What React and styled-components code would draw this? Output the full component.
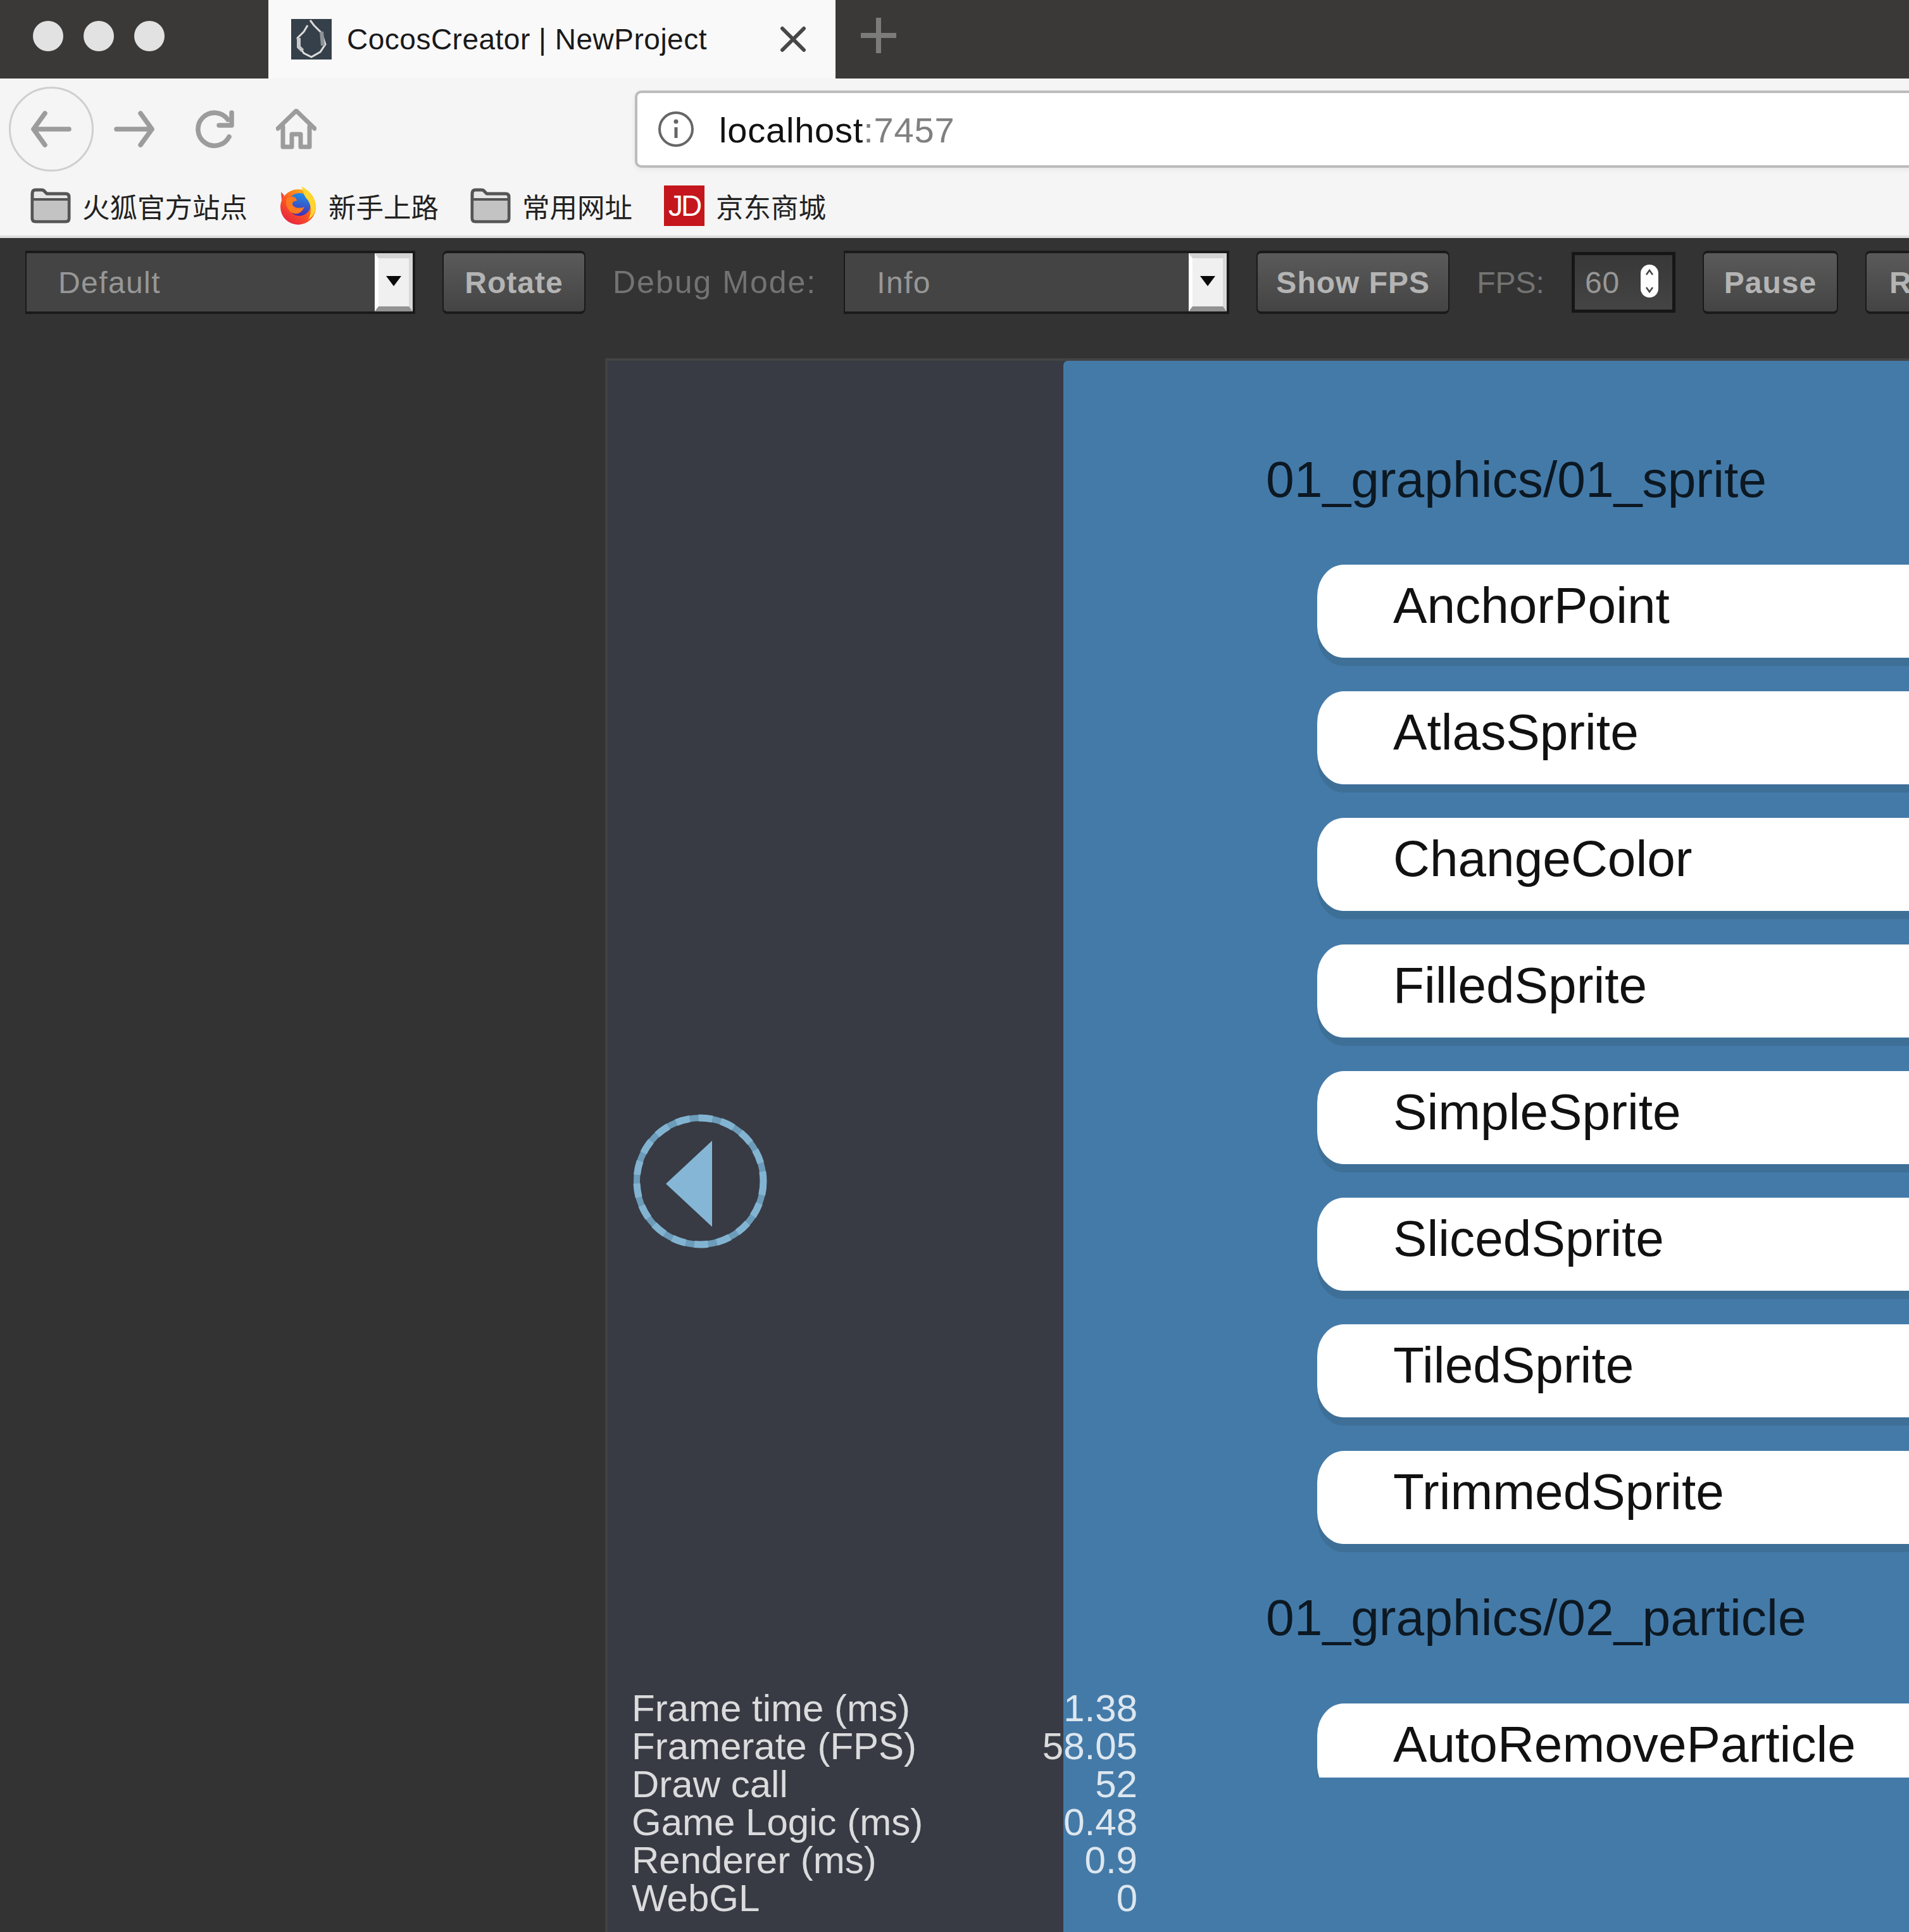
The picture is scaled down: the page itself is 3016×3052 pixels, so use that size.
import React from 'react';
import styled, { createGlobalStyle } from 'styled-components';

const Global = createGlobalStyle`
  html, body { margin: 0; padding: 0; background: #333333; }
  * { box-sizing: border-box; }
`;

const SANS = '"Liberation Sans", Arial, sans-serif';
const CJK = '"Liberation Sans", "Noto Sans CJK SC", sans-serif';

const Page = styled.div`
  width: 3016px; height: 3052px; overflow: hidden; display: flex; flex-direction: column;
  background: #333333; font-family: ${SANS};
`;

/* ---------- browser chrome ---------- */
const TabStrip = styled.div`
  height: 124px; flex: none; display: flex; align-items: stretch; background: #3a3937;
`;
const Lights = styled.div`
  width: 424px; flex: none; display: flex; align-items: center; gap: 32px; padding: 0 0 10px 52px;
`;
const Light = styled.span`
  width: 48px; height: 48px; border-radius: 50%; background: #e2e2e2; flex: none;
`;
const Tab = styled.div`
  width: 896px; flex: none; display: flex; align-items: center; background: #f9f9fa; padding-left: 36px;
`;
const TabTitle = styled.span`
  font-size: 46px; letter-spacing: .5px; color: #1a1a1a; margin-left: 24px; white-space: nowrap;
`;
const TabClose = styled.svg`
  width: 42px; height: 42px; margin-left: auto; margin-right: 46px; flex: none;
`;
const NewTab = styled.svg`
  width: 56px; height: 56px; margin: 28px 0 0 40px; flex: none;
`;
const NavBar = styled.div`
  height: 160px; flex: none; display: flex; align-items: center; background: #f5f5f5;
  padding-left: 14px; overflow: hidden;
`;
const BackCircle = styled.div`
  width: 134px; height: 134px; flex: none; border-radius: 50%; border: 3px solid #cfcfcf;
  display: flex; align-items: center; justify-content: center; margin-right: 32px;
`;
const NavIcon = styled.svg`
  width: 64px; height: 64px; flex: none; margin-right: ${p => p.$gap || 64}px;
`;
const UrlBar = styled.div`
  height: 122px; flex: 1; margin: 0 -20px 0 502px; background: #fff; border: 4px solid #bcbcbc;
  border-radius: 10px; display: flex; align-items: center; padding-left: 32px;
  box-shadow: 0 3px 8px rgba(0,0,0,.06);
`;
const UrlText = styled.span`
  font-size: 56px; letter-spacing: .8px; color: #111; margin-left: 39px; white-space: nowrap; padding-top: 3px;
`;
const UrlPort = styled.span` color: #808080; `;
const BookmarkBar = styled.div`
  height: 88px; flex: none; display: flex; align-items: center; gap: 50px; background: #f5f5f5;
  padding: 0 0 6px 48px;
`;
const Bookmark = styled.div`
  display: flex; align-items: center; gap: 18px; font-family: ${CJK}; font-size: 43.5px; color: #222;
  white-space: nowrap;
`;
const JdLogo = styled.span`
  width: 64px; height: 64px; flex: none; background: #c4161c; color: #fff; display: flex; align-items: center;
  justify-content: center; font-family: ${SANS}; font-size: 46px; letter-spacing: -3px; overflow: hidden;
`;
const Divider = styled.div`
  height: 4px; flex: none; background: #dedede;
`;

/* ---------- preview toolbar ---------- */
const Toolbar = styled.div`
  height: 190px; flex: none; display: flex; align-items: flex-start; gap: 43px; padding: 20px 0 0 40px;
  overflow: hidden; background: #333333;
`;
const Select = styled.div`
  width: ${p => p.$w}px; height: 100px; flex: none; display: flex; align-items: center; background: #444444;
  border-style: solid; border-color: #1a1a1a; border-width: 4px 4px 4px 2px; font-size: 48px; letter-spacing: 1.4px;
  color: #979797; padding-left: ${p => p.$pad}px; position: relative;
`;
const SelectArrow = styled.span`
  position: absolute; right: 0; top: 0; bottom: 0; width: 60px; background: #f0f0f0;
  border-style: solid; border-width: 8px 6px 8px 6px; border-color: #d2d2d2 #d8d8d8 #929292 #ffffff;
  display: flex; align-items: center; justify-content: center;
  &::after {
    content: ""; width: 0; height: 0; margin-top: -4px;
    border-left: 12px solid transparent; border-right: 12px solid transparent; border-top: 16px solid #0a0a0a;
  }
`;
const ToolButton = styled.div`
  width: ${p => p.$w}px; height: 100px; flex: none; display: flex; align-items: center; justify-content: center;
  border-radius: 8px; border-style: solid; border-color: #1a1a1a; border-width: 4px 2px 4px 2px;
  background: linear-gradient(#5a5a5a, #444444); font-size: 48px; font-weight: 700; letter-spacing: 1px; color: #b4b4b4;
  white-space: nowrap;
`;
const ClippedButton = styled(ToolButton)`
  justify-content: flex-start; padding-left: 36px;
`;
const ToolLabel = styled.span`
  height: 100px; flex: none; display: flex; align-items: center; font-size: ${p => p.$size}px;
  letter-spacing: ${p => p.$spacing}px; color: #737373; white-space: nowrap;
`;
const NumberBox = styled.div`
  width: 164px; height: 96px; margin-top: 2px; flex: none; display: flex; align-items: center; position: relative;
  border: 5px solid #161616; background: linear-gradient(#383838, #444444); color: #979797; font-size: 48px;
  letter-spacing: 1px; padding-left: 16px;
`;
const Spinner = styled.svg`
  position: absolute; left: 104px; top: 15px; width: 28px; height: 52px;
`;

/* ---------- game canvas ---------- */
const GameArea = styled.div`
  flex: 1; display: flex; padding-left: 956px; min-height: 0;
`;
const Canvas = styled.div`
  flex: 1; display: flex; position: relative; border-left: 4px solid #414141; border-top: 4px solid #444444;
  min-width: 0; background: #383b44;
`;
const SideStrip = styled.div`
  width: 720px; flex: none; padding: 1190px 0 0 40px;
`;
const BackButton = styled.svg`
  width: 212px; height: 212px; display: block;
`;
const ListPanel = styled.div`
  flex: 1; background: #447aa8; overflow: hidden; min-width: 0; border-top-left-radius: 7px;
`;
const ListClip = styled.div`
  height: 2238px; overflow: hidden; padding: 137px 0 0 320px; display: flex; flex-direction: column;
`;
const GroupTitle = styled.div`
  height: 100px; flex: none; display: flex; align-items: center; font-size: 80.4px; color: #0c1822;
  white-space: nowrap; margin: ${p => (p.$first ? 0 : 66)}px 0 ${p => (p.$first ? 85 : 86)}px;
`;
const SceneRow = styled.div`
  width: 1400px; height: 147px; flex: none; margin: 0 0 ${p => (p.$last ? 0 : 53)}px 81px;
  display: flex; align-items: center; padding: 0 0 18px 120px; background: #fff; font-size: 80.2px; color: #111;
  border-radius: 42px 0 0 42px / 50px 0 0 50px; box-shadow: 0 13px 0 #3e6f97;
  white-space: nowrap;
`;
const Stats = styled.div`
  position: absolute; left: 38px; bottom: 23px; width: 799px; display: flex; justify-content: space-between;
  font-size: 60px; line-height: 60px; color: rgba(255,255,255,.82);
`;
const StatLabels = styled.div` display: flex; flex-direction: column; `;
const StatValues = styled.div` display: flex; flex-direction: column; align-items: flex-end; `;

const Folder = () => (
  <svg width="64" height="56" viewBox="0 0 64 56" style={{ flex: 'none' }}>
    <path d="M3 9 Q3 3 8 3 H18 Q21 3 23 6 L26 9 H56 Q61 9 61 14 V48 Q61 53 56 53 H8 Q3 53 3 48 Z" fill="#e6e6e6" stroke="#555" strokeWidth="5" strokeLinejoin="round" />
    <path d="M5.5 19 H58.5 V48 Q58.5 50.5 56 50.5 H8 Q5.5 50.5 5.5 48 Z" fill="#c3c3c3" />
    <path d="M4 18 H60" stroke="#555" strokeWidth="4" />
  </svg>
);

const Firefox = () => (
  <svg width="60" height="60" viewBox="0 0 60 60" style={{ flex: 'none' }}>
    <defs>
      <linearGradient id="fxBody" x1="0.8" y1="0.1" x2="0.2" y2="0.9">
        <stop offset="0" stopColor="#ffb21a" />
        <stop offset="0.5" stopColor="#ff5a20" />
        <stop offset="1" stopColor="#e8263f" />
      </linearGradient>
      <linearGradient id="fxGlobe" x1="0.6" y1="0" x2="0.4" y2="1">
        <stop offset="0" stopColor="#1f8ee8" />
        <stop offset="1" stopColor="#4a2bb0" />
      </linearGradient>
    </defs>
    <circle cx="30" cy="32" r="28" fill="url(#fxBody)" />
    <path d="M3 8 L8 14 L4 22 Z" fill="#f2402f" />
    <circle cx="32" cy="28" r="18" fill="url(#fxGlobe)" />
    <path d="M36 0 Q56 10 58 30 Q58 44 46 52 Q54 36 46 22 Q38 14 36 0 Z" fill="#ffd52e" />
    <path d="M12 18 Q26 12 28 22 Q18 24 22 30 Q28 36 40 32 Q32 48 18 40 Q8 30 12 18 Z" fill="#ff7a1f" />
  </svg>
);

const Favicon = () => (
  <svg width="64" height="64" viewBox="0 0 64 64" style={{ flex: 'none', display: 'block' }}>
    <rect width="64" height="64" fill="#36404a" />
    <path d="M30 2 L36 10 L48 22 L54 40 L46 52 L32 60 L20 54 L12 42 L10 30 L20 20 L26 10" fill="none" stroke="#dcdcdc" strokeWidth="3" />
    <path d="M12 30 L12 44 L18 50" fill="none" stroke="#c8c8c8" strokeWidth="6" />
    <path d="M48 20 L50 42" fill="none" stroke="#8d9297" strokeWidth="6" />
  </svg>
);

const scenes = ['AnchorPoint', 'AtlasSprite', 'ChangeColor', 'FilledSprite', 'SimpleSprite', 'SlicedSprite', 'TiledSprite', 'TrimmedSprite'];
const stats = [
  ['Frame time (ms)', '1.38'],
  ['Framerate (FPS)', '58.05'],
  ['Draw call', '52'],
  ['Game Logic (ms)', '0.48'],
  ['Renderer (ms)', '0.9'],
  ['WebGL', '0'],
];

export default function App() {
  return (
    <Page>
      <Global />
      <TabStrip>
        <Lights><Light /><Light /><Light /></Lights>
        <Tab>
          <Favicon />
          <TabTitle>CocosCreator | NewProject</TabTitle>
          <TabClose viewBox="0 0 42 42">
            <path d="M4 4 L38 38 M38 4 L4 38" stroke="#474747" strokeWidth="6" strokeLinecap="round" />
          </TabClose>
        </Tab>
        <NewTab viewBox="0 0 56 56">
          <path d="M28 1 V55 M1 28 H55" stroke="#7b7b7a" strokeWidth="8" strokeLinecap="round" />
        </NewTab>
      </TabStrip>
      <NavBar>
        <BackCircle>
          <svg width="64" height="58" viewBox="0 0 64 58">
            <path d="M4 29 H60 M4 29 L22 4 M4 29 L22 54" fill="none" stroke="#9c9c9c" strokeWidth="7.5" strokeLinecap="round" strokeLinejoin="round" />
          </svg>
        </BackCircle>
        <NavIcon viewBox="0 0 64 64">
          <path d="M4 32 H60 M60 32 L42 7 M60 32 L42 57" fill="none" stroke="#9c9c9c" strokeWidth="7.5" strokeLinecap="round" strokeLinejoin="round" />
        </NavIcon>
        <NavIcon viewBox="0 0 64 64">
          <path d="M54 44 A26 26 0 1 1 52 17" fill="none" stroke="#9c9c9c" strokeWidth="7.5" strokeLinecap="round" />
          <path d="M58 6 V26 H38" fill="none" stroke="#9c9c9c" strokeWidth="7.5" strokeLinecap="round" strokeLinejoin="round" />
        </NavIcon>
        <NavIcon viewBox="0 0 64 64" $gap={1}>
          <path d="M3 31 L32 3 L61 31 M11 28 V60 H25 V40 H39 V60 H53 V28" fill="none" stroke="#9c9c9c" strokeWidth="7" strokeLinecap="round" strokeLinejoin="round" />
        </NavIcon>
        <UrlBar>
          <svg width="58" height="58" viewBox="0 0 58 58" style={{ flex: 'none' }}>
            <circle cx="29" cy="29" r="26" fill="none" stroke="#666" strokeWidth="4" />
            <circle cx="29" cy="17" r="3.5" fill="#666" />
            <path d="M29 26 V43" stroke="#666" strokeWidth="5" />
          </svg>
          <UrlText>localhost<UrlPort>:7457</UrlPort></UrlText>
        </UrlBar>
      </NavBar>
      <BookmarkBar>
        <Bookmark><Folder />火狐官方站点</Bookmark>
        <Bookmark><Firefox />新手上路</Bookmark>
        <Bookmark><Folder />常用网址</Bookmark>
        <Bookmark><JdLogo>JD</JdLogo>京东商城</Bookmark>
      </BookmarkBar>
      <Divider />
      <Toolbar>
        <Select $w={616} $pad={50}>Default<SelectArrow /></Select>
        <ToolButton $w={226}>Rotate</ToolButton>
        <ToolLabel $size={50} $spacing={2}>Debug Mode:</ToolLabel>
        <Select $w={609} $pad={50}>Info<SelectArrow /></Select>
        <ToolButton $w={305}>Show FPS</ToolButton>
        <ToolLabel $size={48} $spacing={0}>FPS:</ToolLabel>
        <NumberBox>
          60
          <Spinner viewBox="0 0 28 52">
            <rect width="28" height="52" rx="14" fill="#fff" />
            <path d="M9 16 L14 9 L19 16 M9 36 L14 43 L19 36" fill="none" stroke="#444" strokeWidth="2.5" />
          </Spinner>
        </NumberBox>
        <ToolButton $w={214}>Pause</ToolButton>
        <ClippedButton $w={300}>Recompile</ClippedButton>
      </Toolbar>
      <GameArea>
        <Canvas>
          <SideStrip>
            <BackButton viewBox="0 0 212 212">
              <circle cx="106" cy="106" r="100" fill="none" stroke="#6c9cb9" strokeWidth="10" />
              <circle cx="106" cy="106" r="100" fill="none" stroke="#82b4d2" strokeWidth="11" strokeDasharray="22 14" />
              <path d="M52 110 L125 42 V178 Z" fill="#85b6d6" />
            </BackButton>
          </SideStrip>
          <ListPanel>
            <ListClip>
              <GroupTitle $first>01_graphics/01_sprite</GroupTitle>
              {scenes.map((s, i) => <SceneRow key={s} $last={i === scenes.length - 1}>{s}</SceneRow>)}
              <GroupTitle>01_graphics/02_particle</GroupTitle>
              <SceneRow $last>AutoRemoveParticle</SceneRow>
            </ListClip>
          </ListPanel>
          <Stats>
            <StatLabels>{stats.map(([l]) => <span key={l}>{l}</span>)}</StatLabels>
            <StatValues>{stats.map(([l, v]) => <span key={l}>{v}</span>)}</StatValues>
          </Stats>
        </Canvas>
      </GameArea>
    </Page>
  );
}
